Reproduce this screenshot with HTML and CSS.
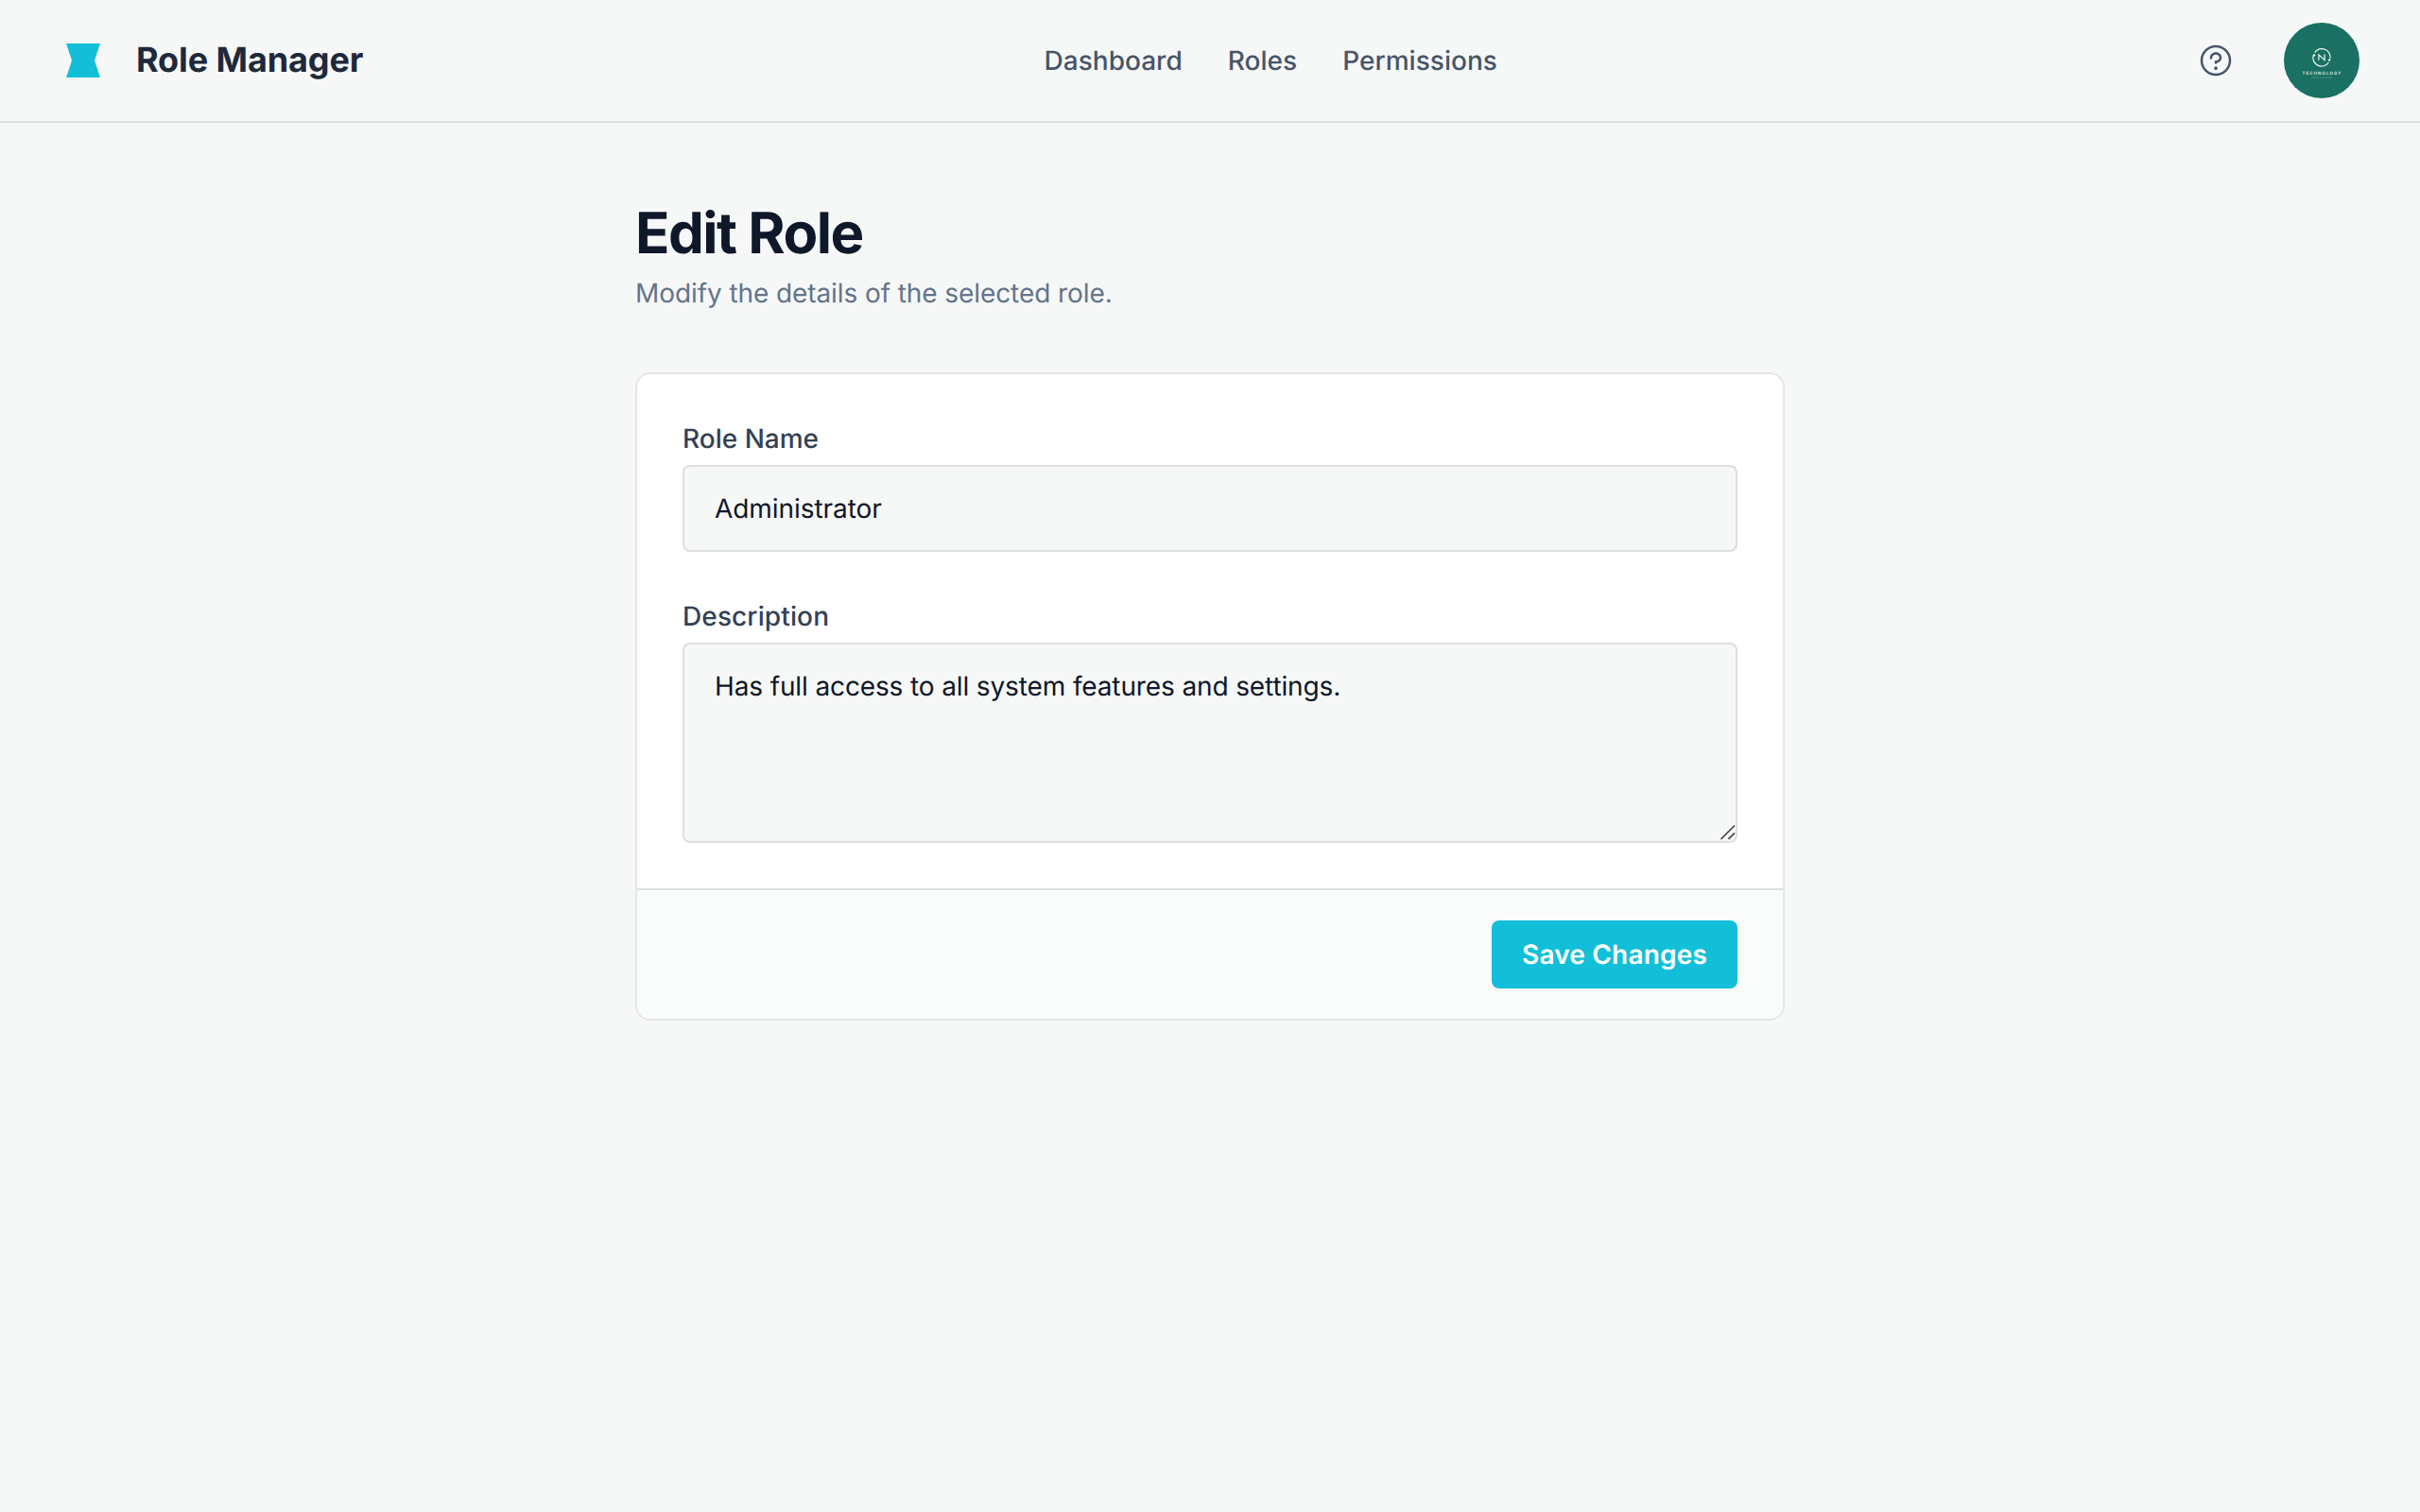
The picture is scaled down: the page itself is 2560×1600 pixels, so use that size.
FILE: index.html
```html
<!DOCTYPE html>
<html lang="en">
<head>
<meta charset="utf-8">
<title>Role Manager</title>
<link rel="stylesheet" href="styles.css">
</head>
<body>
<header class="header">
  <div class="brand">
    <svg class="brand-logo" viewBox="0 0 48 48" fill="currentColor"><path d="M6 6H42L36 24L42 42H6L12 24L6 6Z"/></svg>
    <h2 class="brand-name">Role Manager</h2>
  </div>
  <nav class="nav">
    <a class="nav-link">Dashboard</a>
    <a class="nav-link">Roles</a>
    <a class="nav-link">Permissions</a>
  </nav>
  <div class="actions">
    <button class="help" type="button" aria-label="Help">
      <svg class="help-icon" viewBox="0 0 256 256" fill="currentColor"><path d="M140,180a12,12,0,1,1-12-12A12,12,0,0,1,140,180ZM128,72c-22.06,0-40,16.15-40,36v4a8,8,0,0,0,16,0v-4c0-11,10.77-20,24-20s24,9,24,20-10.77,20-24,20a8,8,0,0,0-8,8v8a8,8,0,0,0,16,0v-.72c18.24-3.35,32-17.9,32-35.28C168,88.15,150.06,72,128,72Zm104,56A104,104,0,1,1,128,24,104.11,104.11,0,0,1,232,128Zm-16,0a88,88,0,1,0-88,88A88.1,88.1,0,0,0,216,128Z"/></svg>
    </button>
    <svg class="avatar" viewBox="0 0 80 80">
      <rect width="80" height="80" fill="#1a7062"/>
      <g fill="none" stroke="#f2f7f5">
        <path d="M32.6 31.6A9 9 0 0 1 48.9 38.5M47.4 42A9 9 0 0 1 31.1 35" stroke-width="1.2"/>
        <path d="M36.9 39.8V33.8L43.1 39.6V33.4" stroke-width="1.2"/>
      </g>
      <g fill="#f2f7f5"><circle cx="32" cy="34.4" r="1.2"/><circle cx="48" cy="39.6" r="1.2"/></g>
      <text class="avatar-title" x="40" y="55" textLength="41">TECHNOLOGY</text>
      <text class="avatar-tagline" x="40" y="59" textLength="22">YOUR CULTURE</text>
    </svg>
  </div>
</header>
<main class="main">
  <h1 class="title">Edit Role</h1>
  <p class="subtitle">Modify the details of the selected role.</p>
  <form class="card">
    <div class="fields">
      <div class="field">
        <label class="label" for="role-name">Role Name</label>
        <input class="control" id="role-name" type="text" value="Administrator">
      </div>
      <div class="field">
        <label class="label label-wide" for="description">Description</label>
        <div class="area">
          <textarea class="control" id="description" rows="4">Has full access to all system features and settings.</textarea>
          <svg class="grip" viewBox="0 0 16 16" fill="none" stroke-width="1.8"><path d="M1.5 16.5L16 2M9.5 16.5L16 10" stroke="#fff"/><path d="M.5 15L15 .5M8.5 15L15 8.5" stroke="#555758"/></svg>
        </div>
      </div>
    </div>
    <div class="card-footer">
      <button class="save" type="button">Save Changes</button>
    </div>
  </form>
</main>
</body>
</html>
```
FILE: styles.css
```css
*, *::before, *::after {
  box-sizing: border-box;
  margin: 0;
}

body {
  min-height: 100vh;
  background: #f6f8f7;
  color: #0f172a;
  font-family: Inter, "Noto Sans", sans-serif;
  font-size: 28px;
  line-height: 40px;
  text-rendering: geometricPrecision;
}

.header {
  display: flex;
  align-items: center;
  justify-content: space-between;
  padding: 24px 64px;
  border-bottom: 2px solid #dddfde;
}

.brand {
  display: flex;
  align-items: center;
  gap: 32px;
  color: #13bfd8;
}

.brand-logo {
  width: 48px;
  height: 48px;
}

.brand-name {
  padding-bottom: 2px;
  color: #1e293b;
  font-size: 36px;
  font-weight: 700;
  line-height: 54px;
  letter-spacing: -0.1px;
}

.nav {
  display: flex;
  gap: 48px;
}

.nav-link {
  color: #475569;
  font-weight: 500;
  letter-spacing: 0.03px;
}

.actions {
  display: flex;
  gap: 32px;
}

.help {
  display: flex;
  align-items: center;
  justify-content: center;
  width: 80px;
  height: 80px;
  padding: 0;
  border: 0;
  background: none;
  color: #475569;
}

.help-icon {
  width: 40px;
  height: 40px;
}

.avatar {
  width: 80px;
  height: 80px;
  border-radius: 50%;
}

.avatar-title,
.avatar-tagline {
  fill: #e3efec;
  font-weight: 600;
  font-size: 4.4px;
  text-anchor: middle;
}

.avatar-tagline {
  fill: #78aba1;
  font-weight: 400;
  font-size: 2.4px;
}

.main {
  width: 1216px;
  margin: 0 auto;
  padding: 81px 0 80px;
}

.title {
  font-size: 60px;
  font-weight: 700;
  line-height: 72px;
  letter-spacing: -0.025em;
}

.subtitle {
  margin-top: 7px;
  color: #64748b;
  letter-spacing: -0.085px;
}

.card {
  margin-top: 64px;
  overflow: hidden;
  border: 2px solid #e4e6e5;
  border-radius: 16px;
  background: #fff;
}

.fields {
  display: flex;
  flex-direction: column;
  gap: 48px;
  padding: 48px;
}

.field {
  display: flex;
  flex-direction: column;
  gap: 8px;
}

.label {
  color: #334155;
  font-weight: 500;
}

.label-wide {
  letter-spacing: 0.12px;
}

.control {
  display: block;
  width: 100%;
  padding: 24px 32px;
  border: 2px solid #dddfde;
  border-radius: 8px;
  outline: 0;
  background: #f6f8f7;
  color: #0f172a;
  font: inherit;
  letter-spacing: -0.125px;
  text-rendering: inherit;
  resize: none;
}

input.control {
  height: 92px;
  letter-spacing: -0.06px;
}

.area {
  position: relative;
}

.grip {
  position: absolute;
  right: 2px;
  bottom: 3px;
  width: 16px;
  height: 16px;
}

.card-footer {
  display: flex;
  justify-content: flex-end;
  padding: 32px 48px;
  border-top: 2px solid #dddfde;
  background: #fafcfb;
}

.save {
  padding: 16px 32px;
  border: 0;
  border-radius: 8px;
  background: #13bfd8;
  box-shadow: 0 2px 4px rgba(0, 0, 0, 0.05);
  color: #fff;
  font: inherit;
  font-weight: 600;
  letter-spacing: 0.184px;
  text-rendering: inherit;
}
```
